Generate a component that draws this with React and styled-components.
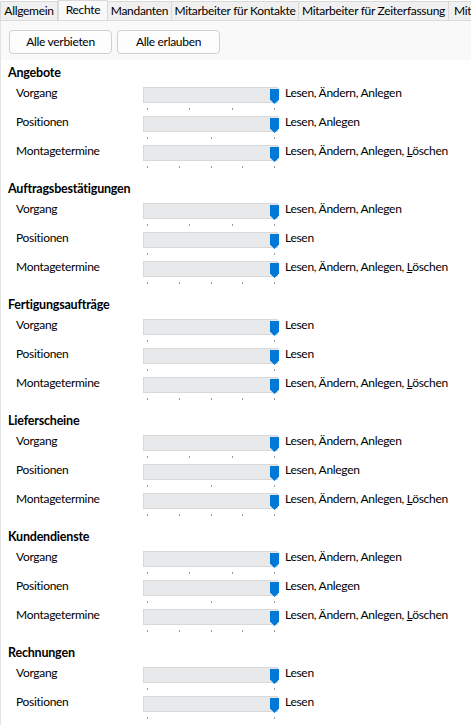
import React from "react";
import styled, { createGlobalStyle } from "styled-components";

const FONT = `"Lato", "Liberation Sans", sans-serif`;

const Global = createGlobalStyle`
  html, body { margin: 0; padding: 0; background: #ffffff; overflow: hidden; }
  body { font-family: ${FONT}; font-size: 12px; color: #000; letter-spacing: -0.3px; }
  #root { width: 471px; height: 725px; overflow: hidden; }
`;

const Frame = styled.div`
  width: 471px;
  height: 725px;
  display: flex;
  flex-direction: column;
  overflow: hidden;
`;

const TabStrip = styled.div`
  display: flex;
  align-items: flex-end;
  height: 21px;
  flex: none;
  background: #ffffff;
  border-bottom: 1px solid #d9d9d9;
  box-sizing: border-box;
  white-space: nowrap;
  overflow: hidden;
`;

const Tab = styled.div`
  flex: none;
  box-sizing: border-box;
  height: ${(p) => (p.$active ? "21px" : "19px")};
  width: ${(p) => p.$w}px;
  line-height: ${(p) => (p.$active ? "18px" : "17px")};
  background: ${(p) => (p.$active ? "#f9f9f9" : "#f0f0f0")};
  border: 1px solid #d9d9d9;
  border-left: ${(p) => (p.$first || p.$active ? "1px solid #d9d9d9" : "none")};
  border-bottom: ${(p) => (p.$active ? "1px solid #f9f9f9" : "none")};
  margin-bottom: ${(p) => (p.$active ? "-1px" : "0")};
  overflow: hidden;
  text-align: ${(p) => (p.$last ? "left" : "center")};
  padding-left: ${(p) => (p.$last ? "5px" : "0")};
  font-size: 12px;
`;

const Page = styled.div`
  flex: 1;
  display: flex;
  flex-direction: column;
  border-left: 1px solid #e3e3e3;
  min-height: 0;
`;

const Toolbar = styled.div`
  flex: none;
  height: 39px;
  box-sizing: border-box;
  background: #f9f9f9;
  display: flex;
  align-items: flex-start;
  gap: 5px;
  padding: 9px 0 0 8px;
`;

const Button = styled.button`
  width: 103px;
  height: 24px;
  box-sizing: border-box;
  background: #fdfdfd;
  border: 1px solid #d0d0d0;
  border-radius: 4px;
  font-family: ${FONT};
  font-size: 12px;
  letter-spacing: -0.3px;
  color: #000;
  padding: 0;
  line-height: 20px;
`;

const Content = styled.div`
  flex: 1;
  background: #ffffff;
  padding-top: 5px;
  display: flex;
  flex-direction: column;
  gap: 8px;
`;

const Section = styled.section`
  display: flex;
  flex-direction: column;
  padding-left: 7px;
`;

const SectionTitle = styled.div`
  height: 21px;
  box-sizing: border-box;
  padding-top: 1px;
  line-height: 14px;
  font-weight: 700;
  font-size: 12.5px;
  letter-spacing: -0.2px;
`;

const Row = styled.div`
  height: 29px;
  display: grid;
  grid-template-columns: 127px 136px auto;
  padding-left: 8px;
`;

const Label = styled.div`
  line-height: 13px;
`;

const Value = styled.div`
  line-height: 13px;
  padding-left: 6px;
  white-space: nowrap;
`;

const Mnemonic = styled.span`
  text-decoration: underline;
`;

const Slider = styled.div`
  position: relative;
  height: 27px;
  padding-top: 1px;
  box-sizing: border-box;
`;

const Track = styled.div`
  width: 135px;
  height: 16px;
  box-sizing: border-box;
  background: #e7e9ea;
  border: 1px solid #d6d8d9;
`;

const Ticks = styled.div`
  display: flex;
  justify-content: space-between;
  width: 128px;
  margin: 5px 0 0 4px;
`;

const Tick = styled.span`
  width: 1px;
  height: 2px;
  background: #9a9a9a;
`;

const Thumb = styled.svg`
  position: absolute;
  left: 127px;
  top: 3px;
`;

function Range({ ticks }) {
  return (
    <Slider>
      <Track />
      <Ticks>
        {Array.from({ length: ticks }).map((_, i) => (
          <Tick key={i} />
        ))}
      </Ticks>
      <Thumb width="9" height="15" viewBox="0 0 9 15">
        <path d="M0 0 H9 V10.5 L4.5 15 L0 10.5 Z" fill="#0078d7" />
      </Thumb>
    </Slider>
  );
}

const LEVELS = {
  1: ["Lesen"],
  2: ["Lesen", "Anlegen"],
  3: ["Lesen", "Ändern", "Anlegen"],
  4: ["Lesen", "Ändern", "Anlegen", "Löschen"],
};

function ValueText({ level }) {
  const items = LEVELS[level];
  return (
    <Value>
      {items.map((it, i) => (
        <React.Fragment key={it}>
          {i > 0 ? ", " : ""}
          {it === "Löschen" ? (
            <>
              <Mnemonic>L</Mnemonic>öschen
            </>
          ) : (
            it
          )}
        </React.Fragment>
      ))}
    </Value>
  );
}

const sections = [
  { title: "Angebote", rows: [["Vorgang", 3], ["Positionen", 2], ["Montagetermine", 4]] },
  { title: "Auftragsbestätigungen", rows: [["Vorgang", 3], ["Positionen", 1], ["Montagetermine", 4]] },
  { title: "Fertigungsaufträge", rows: [["Vorgang", 1], ["Positionen", 1], ["Montagetermine", 4]] },
  { title: "Lieferscheine", rows: [["Vorgang", 3], ["Positionen", 2], ["Montagetermine", 4]] },
  { title: "Kundendienste", rows: [["Vorgang", 3], ["Positionen", 2], ["Montagetermine", 4]] },
  { title: "Rechnungen", rows: [["Vorgang", 1], ["Positionen", 1]] },
];

const tabs = [
  { label: "Allgemein", w: 58 },
  { label: "Rechte", w: 50, active: true },
  { label: "Mandanten", w: 64 },
  { label: "Mitarbeiter für Kontakte", w: 127 },
  { label: "Mitarbeiter für Zeiterfassung", w: 150 },
  { label: "Mitarbeiter", w: 80, last: true },
];

export default function App() {
  return (
    <>
      <Global />
      <Frame>
        <TabStrip>
          {tabs.map((t, i) => (
            <Tab key={t.label} $w={t.w} $active={t.active} $first={i === 0} $last={t.last}>
              {t.label}
            </Tab>
          ))}
        </TabStrip>
        <Page>
          <Toolbar>
            <Button>Alle verbieten</Button>
            <Button>Alle erlauben</Button>
          </Toolbar>
          <Content>
            {sections.map((s) => (
              <Section key={s.title}>
                <SectionTitle>{s.title}</SectionTitle>
                {s.rows.map(([label, level]) => (
                  <Row key={label}>
                    <Label>{label}</Label>
                    <Range ticks={level + 1} />
                    <ValueText level={level} />
                  </Row>
                ))}
              </Section>
            ))}
          </Content>
        </Page>
      </Frame>
    </>
  );
}
